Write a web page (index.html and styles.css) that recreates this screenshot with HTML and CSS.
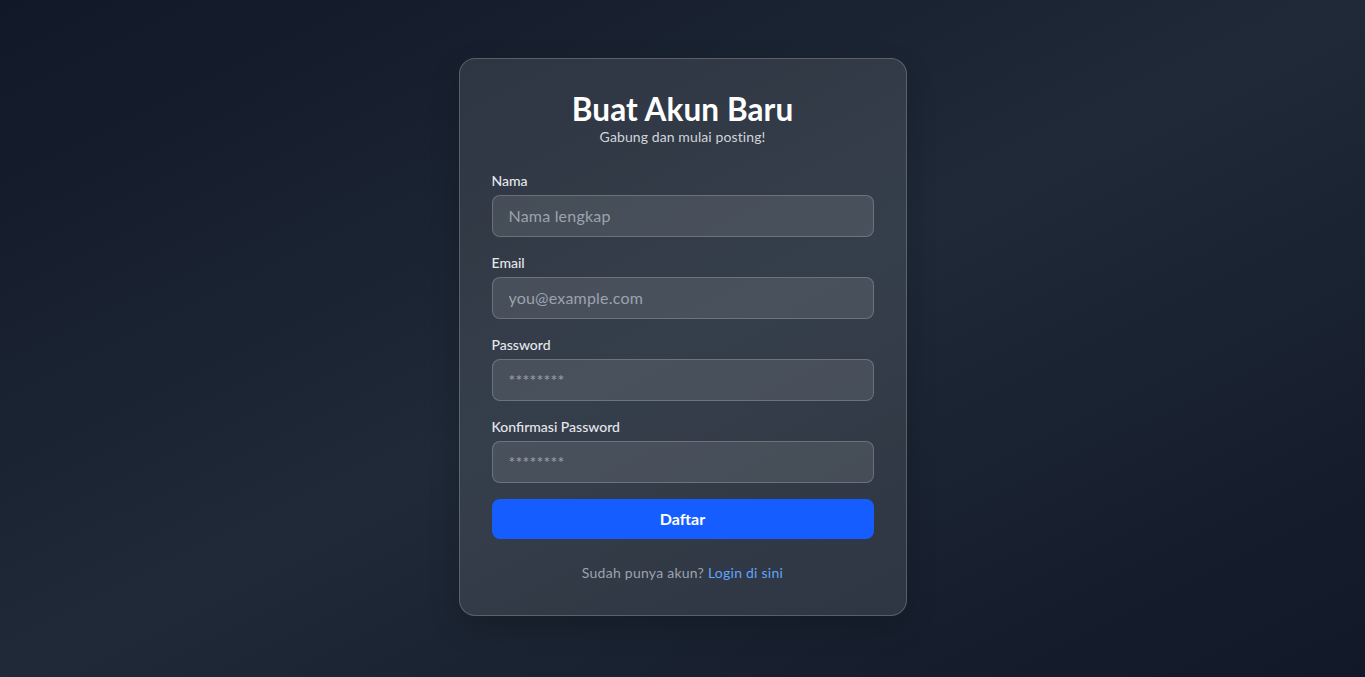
FILE: index.html
```html
<!DOCTYPE html>
<html lang="id">
<head>
<meta charset="utf-8">
<title>Daftar</title>
<link rel="stylesheet" href="styles.css">
</head>
<body>
<main class="page">
  <section class="card">
    <header class="card-head">
      <h1 class="title">Buat Akun Baru</h1>
      <p class="subtitle">Gabung dan mulai posting!</p>
    </header>
    <form class="form">
      <div class="field">
        <label class="label" for="nama">Nama</label>
        <input class="input" id="nama" type="text" placeholder="Nama lengkap">
      </div>
      <div class="field">
        <label class="label" for="email">Email</label>
        <input class="input" id="email" type="email" placeholder="you@example.com">
      </div>
      <div class="field">
        <label class="label" for="pw">Password</label>
        <input class="input" id="pw" type="password" placeholder="********">
      </div>
      <div class="field">
        <label class="label" for="pw2">Konfirmasi Password</label>
        <input class="input" id="pw2" type="password" placeholder="********">
      </div>
      <button class="btn" type="button">Daftar</button>
    </form>
    <p class="foot">Sudah punya akun? <a class="link" href="#">Login di sini</a></p>
  </section>
</main>
</body>
</html>
```
FILE: styles.css
```css
* { box-sizing: border-box; }
html, body { margin: 0; padding: 0; }
body {
  font-family: Lato, "Open Sans", sans-serif;
  background: linear-gradient(to bottom right, #111827, #1f2937, #111827);
  min-height: 100vh;
  color: #fff;
}
.page {
  min-height: 100vh;
  display: flex;
  align-items: center;
  justify-content: center;
  padding-bottom: 4px;
}
.card {
  width: 448px;
  padding: 32px;
  border-radius: 16px;
  background: rgba(255, 255, 255, 0.1);
  border: 1px solid rgba(255, 255, 255, 0.2);
  box-shadow: 0 12px 30px rgba(0, 0, 0, 0.18);
}
.card-head { text-align: center; margin-bottom: 24px; }
.title {
  margin: 0;
  font-size: 31.5px;
  line-height: 36px;
  font-weight: 700;
  letter-spacing: 0.1px;
  color: #fff;
}
.subtitle {
  margin: 0;
  font-size: 14px;
  line-height: 20px;
  color: #d1d5db;
  letter-spacing: 0.1px;
}
.form { display: flex; flex-direction: column; gap: 16px; }
.field { display: flex; flex-direction: column; }
.label {
  font-size: 14px;
  line-height: 20px;
  font-weight: 500;
  color: #e5e7eb;
  margin-bottom: 4px;
}
.input {
  font-family: inherit;
  font-size: 16px;
  line-height: 24px;
  height: 42px;
  padding: 8px 16px;
  border-radius: 8px;
  border: 1px solid rgba(255, 255, 255, 0.2);
  background: rgba(255, 255, 255, 0.1);
  color: #fff;
  outline: none;
  letter-spacing: 0.2px;
}
.input::placeholder { color: #9ca3af; }
.btn {
  font-family: inherit;
  height: 40px;
  border: 0;
  border-radius: 8px;
  background: #165dff;
  color: #fff;
  font-size: 16px;
  font-weight: 700;
  cursor: pointer;
}
.foot {
  margin: 24px 0 0;
  text-align: center;
  font-size: 14px;
  line-height: 20px;
  color: #9ca3af;
  letter-spacing: 0.25px;
}
.link { color: #60a5fa; text-decoration: none; }
```
